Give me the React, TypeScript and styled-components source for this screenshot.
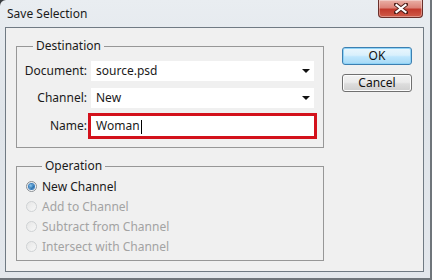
import React from "react";
import styled, { createGlobalStyle } from "styled-components";

const Global = createGlobalStyle`
  html, body { margin: 0; padding: 0; background: #3a3d40; }
  body { width: 432px; height: 280px; overflow: hidden; font-family: "Segoe UI", "Noto Sans", "Open Sans", sans-serif; }
  * { box-sizing: border-box; }
`;

const Window = styled.div`
  width: 432px;
  height: 280px;
  display: flex;
  flex-direction: column;
  padding: 0 6px 6px 5px;
  border-right: 2px solid #6f757b;
  border-bottom: 2px solid #6f757b;
  border-top-left-radius: 6px;
  background: linear-gradient(180deg, #e9edf1 0%, #dfe4e9 40%, #e3e7ec 100%);
`;

const TitleBar = styled.div`
  height: 27px;
  display: flex;
  align-items: flex-start;
  flex: none;
`;

const Title = styled.div`
  padding: 6px 0 0 2px;
  font-size: 12px;
  line-height: 16px;
  color: #1b1b1b;
`;

const CloseButton = styled.div`
  margin-left: auto;
  margin-right: 1px;
  width: 45px;
  height: 18px;
  display: flex;
  align-items: center;
  justify-content: center;
  border: 1px solid #6a2f2a;
  border-top: none;
  border-radius: 0 0 4px 4px;
  background: linear-gradient(180deg, #eab0a6 0%, #dc8378 45%, #c23a2c 55%, #d05b49 100%);
  box-shadow: inset 0 0 0 1px rgba(255, 255, 255, 0.35);
`;

const Client = styled.div`
  flex: 1;
  border: 1px solid #707a83;
  background: #f0f0f0;
  display: grid;
  grid-template-columns: 308px 70px;
  column-gap: 18px;
  align-items: start;
  padding: 10px 0 0 10px;
  font-size: 12px;
  color: #1a1a1a;
`;

const LeftCol = styled.div`
  display: flex;
  flex-direction: column;
  gap: 10px;
`;

const Group = styled.fieldset<{ $pad: string }>`
  margin: 0;
  padding: ${(p) => p.$pad};
  min-width: 0;
  border: 1px solid #979797;
`;

const Legend = styled.legend`
  margin-left: 16px;
  padding: 0 3px;
  font-size: 12px;
  line-height: 16px;
  color: #1a1a1a;
`;

const FormGrid = styled.div`
  display: grid;
  grid-template-columns: 70px 223px;
  column-gap: 4px;
  row-gap: 7px;
  align-items: center;
`;

const Label = styled.div`
  text-align: right;
  line-height: 20px;
`;

const Field = styled.div<{ $highlight?: boolean }>`
  height: 20px;
  background: #fff;
  display: flex;
  align-items: center;
  padding: 0 4px 0 5px;
  line-height: 20px;
  box-shadow: ${(p) => (p.$highlight ? "0 0 0 3px #d3111b" : "none")};
  margin-top: ${(p) => (p.$highlight ? "1px" : "0")};
`;

const FieldText = styled.span`
  flex: 1;
  white-space: nowrap;
`;

const Caret = styled.span`
  display: inline-block;
  width: 1px;
  height: 14px;
  background: #000;
  vertical-align: middle;
  margin-left: 1px;
`;

const Arrow = styled.span`
  width: 0;
  height: 0;
  border-left: 4px solid transparent;
  border-right: 4px solid transparent;
  border-top: 4px solid #111;
`;

const RadioList = styled.div`
  display: flex;
  flex-direction: column;
`;

const RadioRow = styled.div<{ $disabled?: boolean }>`
  height: 20px;
  display: flex;
  align-items: center;
  gap: 5px;
  color: ${(p) => (p.$disabled ? "#a3a3a3" : "#1a1a1a")};
`;

const RadioDot = styled.span<{ $checked?: boolean; $disabled?: boolean }>`
  width: 11px;
  height: 11px;
  border-radius: 50%;
  flex: none;
  border: 1px solid ${(p) => (p.$disabled ? "#cfd2d4" : "#8a8f94")};
  background: ${(p) =>
    p.$disabled
      ? "linear-gradient(135deg, #e6e6e6, #f7f7f7)"
      : "linear-gradient(135deg, #dfe3e6, #ffffff)"};
  display: flex;
  align-items: center;
  justify-content: center;
  &::after {
    content: "";
    display: ${(p) => (p.$checked ? "block" : "none")};
    width: 5px;
    height: 5px;
    border-radius: 50%;
    background: radial-gradient(circle at 35% 35%, #8ccaf2, #1b64a5 70%, #0e3f73);
    box-shadow: 0 0 0 1px #3a7fbf;
  }
`;

const ButtonCol = styled.div`
  display: flex;
  flex-direction: column;
  gap: 9px;
  margin-top: 9px;
`;

const Button = styled.div<{ $primary?: boolean }>`
  height: 18px;
  width: 70px;
  border-radius: 3px;
  display: flex;
  align-items: center;
  justify-content: center;
  font-size: 12px;
  line-height: 16px;
  color: #111;
  border: 1px solid ${(p) => (p.$primary ? "#3c7fb1" : "#707070")};
  background: ${(p) =>
    p.$primary
      ? "linear-gradient(180deg, #eaf6fd 0%, #d9f0fc 45%, #bee6fd 55%, #a7d9f5 100%)"
      : "linear-gradient(180deg, #f2f2f2 0%, #ebebeb 45%, #dddddd 55%, #cfcfcf 100%)"};
  box-shadow: ${(p) => (p.$primary ? "inset 0 0 0 1px #8fd3f7" : "inset 0 0 0 1px #fcfcfc")};
`;

const CloseGlyph = () => (
  <svg width="14" height="11" viewBox="0 0 14 11">
    <path d="M2 1.5 L12 9.5 M12 1.5 L2 9.5" stroke="#4a1c17" strokeWidth="4" strokeLinecap="square" />
    <path d="M2.5 2 L11.5 9 M11.5 2 L2.5 9" stroke="#ffffff" strokeWidth="2.2" strokeLinecap="square" />
  </svg>
);

const ops = [
  { label: "New Channel", checked: true, disabled: false },
  { label: "Add to Channel", checked: false, disabled: true },
  { label: "Subtract from Channel", checked: false, disabled: true },
  { label: "Intersect with Channel", checked: false, disabled: true },
];

export default function App() {
  return (
    <>
      <Global />
      <Window>
        <TitleBar>
          <Title>Save Selection</Title>
          <CloseButton>
            <CloseGlyph />
          </CloseButton>
        </TitleBar>
        <Client>
          <LeftCol>
            <Group $pad="7px 0 11px 0">
              <Legend>Destination</Legend>
              <FormGrid>
                <Label>Document:</Label>
                <Field>
                  <FieldText>source.psd</FieldText>
                  <Arrow />
                </Field>
                <Label>Channel:</Label>
                <Field>
                  <FieldText>New</FieldText>
                  <Arrow />
                </Field>
                <Label>Name:</Label>
                <Field $highlight>
                  <FieldText>
                    Woman
                    <Caret />
                  </FieldText>
                </Field>
              </FormGrid>
            </Group>
            <Group $pad="2px 0 4px 9px">
              <Legend>Operation</Legend>
              <RadioList>
                {ops.map((o) => (
                  <RadioRow key={o.label} $disabled={o.disabled}>
                    <RadioDot $checked={o.checked} $disabled={o.disabled} />
                    {o.label}
                  </RadioRow>
                ))}
              </RadioList>
            </Group>
          </LeftCol>
          <ButtonCol>
            <Button $primary>OK</Button>
            <Button>Cancel</Button>
          </ButtonCol>
        </Client>
      </Window>
    </>
  );
}
